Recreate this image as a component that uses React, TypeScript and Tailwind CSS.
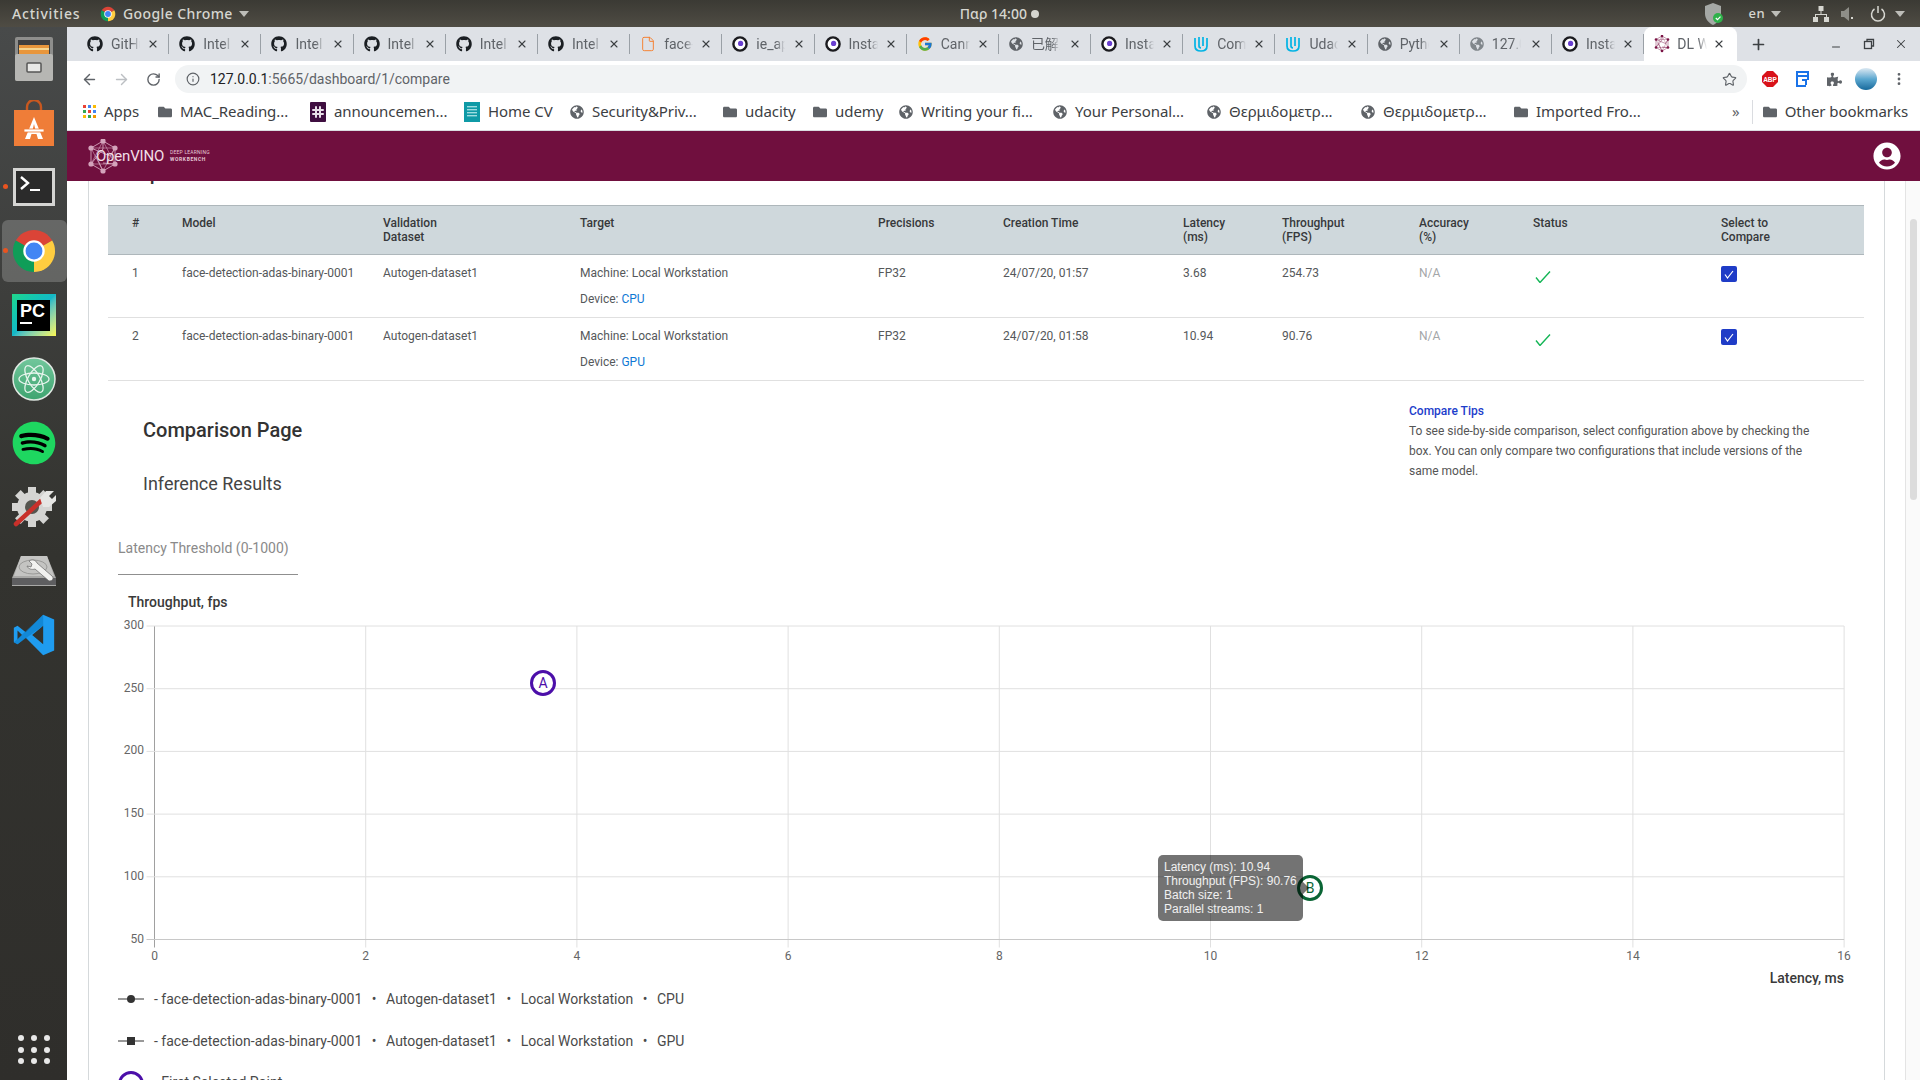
import React from 'react';
import { ArrowLeft, ArrowRight, RotateCw, Info, Star, EllipsisVertical, Plus, X, Minus, File } from 'lucide-react';
import { FaGithub, FaGlobeAmericas, FaFolder, FaUserCircle, FaPuzzlePiece, FaSpotify } from 'react-icons/fa';
import { FcGoogle } from 'react-icons/fc';

const Mesh = ({ size, color, className }: { size: number; color: string; className?: string }) => {
  const pts: [number, number][] = [[16, 2], [28, 9], [28, 25], [16, 32], [4, 25], [4, 9]];
  const inner: [number, number][] = [[16, 10], [23, 17], [16, 24], [9, 17]];
  return (
    <svg width={size} height={size * 35 / 32} viewBox="0 0 32 35" className={className}>
      {pts.map((p, i) => (
        <g key={i}>
          <line x1={p[0]} y1={p[1]} x2={pts[(i + 1) % 6][0]} y2={pts[(i + 1) % 6][1]} stroke={color} strokeWidth="0.9" />
          <line x1={p[0]} y1={p[1]} x2={inner[i % 4][0]} y2={inner[i % 4][1]} stroke={color} strokeWidth="0.9" />
          <line x1={p[0]} y1={p[1]} x2={pts[(i + 2) % 6][0]} y2={pts[(i + 2) % 6][1]} stroke={color} strokeWidth="0.6" />
          <circle cx={p[0]} cy={p[1]} r="2.6" fill={color} />
        </g>
      ))}
    </svg>
  );
};

const ChromeLogo = ({ size }: { size: number }) => (
  <svg width={size} height={size} viewBox="0 0 24 24">
    <path d="M2.5 6.5A11 11 0 0 1 21.5 6.5L12 12Z" fill="#db4437" />
    <path d="M2.5 6.5A11 11 0 0 0 12 23L12 12Z" fill="#0f9d58" />
    <path d="M21.5 6.5A11 11 0 0 1 12 23L12 12Z" fill="#ffcd40" />
    <circle cx="12" cy="12" r="5.6" fill="#fff" />
    <circle cx="12" cy="12" r="4.4" fill="#4285f4" />
  </svg>
);

const InstIcon = () => (
  <svg width="16" height="16" viewBox="0 0 16 16" className="shrink-0">
    <circle cx="8" cy="8" r="6.6" fill="#fff" stroke="#1b1b1f" strokeWidth="2.4" />
    <circle cx="8.6" cy="7.4" r="2.6" fill="#6a3fd0" />
  </svg>
);

const UdacityIcon = () => (
  <svg width="16" height="18" viewBox="0 0 16 18" className="shrink-0" fill="none" stroke="#02b3e4" strokeWidth="1.7">
    <path d="M2 3v8c0 3 2.400 5 6 5s6-2 6-5V3" />
    <path d="M6 2v9c0 1 .8 1.800 2 1.800" />
    <path d="M10 2v9" />
  </svg>
);

const Globe = ({ className = 'text-[#5f6368]' }: { className?: string }) => <FaGlobeAmericas size={14} className={`shrink-0 ${className}`} />;
const Git = () => <FaGithub size={16} className="shrink-0 text-[#1b1f23]" />;

const tabs: { title: string; icon: React.ReactNode; active?: boolean }[] = [
  { title: 'GitHub', icon: <Git /> },
  { title: 'Intel', icon: <Git /> },
  { title: 'Intel', icon: <Git /> },
  { title: 'Intel', icon: <Git /> },
  { title: 'Intel', icon: <Git /> },
  { title: 'Intel', icon: <Git /> },
  { title: 'face-detection', icon: <File size={16} strokeWidth={1.4} className="shrink-0 text-[#f57c28]" /> },
  { title: 'ie_api', icon: <InstIcon /> },
  { title: 'Instance', icon: <InstIcon /> },
  { title: 'Canny', icon: <FcGoogle size={16} className="shrink-0" /> },
  { title: '已解决', icon: <Globe /> },
  { title: 'Instance', icon: <InstIcon /> },
  { title: 'Compare', icon: <UdacityIcon /> },
  { title: 'Udacity', icon: <UdacityIcon /> },
  { title: 'Python', icon: <Globe /> },
  { title: '127.0.0.1', icon: <Globe className="text-[#80868b]" /> },
  { title: 'Instance', icon: <InstIcon /> },
];

const Folder = () => <FaFolder size={14} className="shrink-0 text-[#5f6368]" />;

const AppsIcon = () => {
  const c = ['#ea4335', '#4285f4', '#fbbc04', '#34a853', '#ea4335', '#4285f4', '#fbbc04', '#34a853', '#f29900'];
  return (
    <span className="grid grid-cols-3 gap-[2px] w-[13px] shrink-0">
      {c.map((k, i) => (
        <svg key={i} width="3" height="3" viewBox="0 0 3 3"><rect width="3" height="3" fill={k} /></svg>
      ))}
    </span>
  );
};

const SlackIcon = () => (
  <svg width="16" height="20" viewBox="0 0 16 20" className="shrink-0">
    <rect width="16" height="20" rx="1" fill="#3f0e40" />
    <g stroke="#e8e0e8" strokeWidth="2" strokeLinecap="round">
      <path d="M6 5v10M10 5v10M3 8h10M3 12h10" />
    </g>
  </svg>
);

const CvIcon = () => (
  <svg width="16" height="20" viewBox="0 0 16 20" className="shrink-0">
    <rect width="16" height="20" fill="#0f9aa6" />
    <g fill="#9fdde0">
      <rect x="3" y="4" width="10" height="1.4" /><rect x="3" y="7" width="10" height="1.4" />
      <rect x="3" y="10" width="10" height="1.4" /><rect x="3" y="13" width="10" height="1.4" />
    </g>
  </svg>
);

const bookmarks: { w: string; icon: React.ReactNode; label: string }[] = [
  { w: 'w-[75px]', icon: <AppsIcon />, label: 'Apps' },
  { w: 'w-[152px]', icon: <Folder />, label: 'MAC_Reading...' },
  { w: 'w-[154px]', icon: <SlackIcon />, label: 'announcemen...' },
  { w: 'w-[106px]', icon: <CvIcon />, label: 'Home CV' },
  { w: 'w-[153px]', icon: <Globe />, label: 'Security&Priv...' },
  { w: 'w-[90px]', icon: <Folder />, label: 'udacity' },
  { w: 'w-[86px]', icon: <Folder />, label: 'udemy' },
  { w: 'w-[154px]', icon: <Globe />, label: 'Writing your fi...' },
  { w: 'w-[154px]', icon: <Globe />, label: 'Your Personal...' },
  { w: 'w-[154px]', icon: <Globe />, label: 'Θερμιδομετρ...' },
  { w: 'w-[153px]', icon: <Globe />, label: 'Θερμιδομετρ...' },
  { w: 'w-[221px]', icon: <Folder />, label: 'Imported Fro...' },
];

const dockSlot = 'h-[64px] w-full flex items-center justify-center relative shrink-0';

const Dock = () => (
  <aside className="w-[67px] shrink-0 h-full bg-gradient-to-b from-[#484a4a] via-[#33332f] to-[#2f2e2b] flex flex-col">
    <div className={dockSlot}>
      <svg width="42" height="46" viewBox="0 0 42 46">
        <rect x="2" y="1" width="38" height="44" rx="2" fill="#8e8e8c" />
        <rect x="5" y="4" width="32" height="14" fill="#3f3f3f" />
        <rect x="6" y="9" width="30" height="9" fill="#e8963c" />
        <rect x="6" y="12" width="30" height="2" fill="#f6d58f" />
        <rect x="2" y="18" width="38" height="27" rx="2" fill="#b6b6b3" />
        <rect x="14" y="27" width="14" height="9" rx="1" fill="#e8e8e6" stroke="#555" strokeWidth="1.5" />
      </svg>
    </div>
    <div className={dockSlot}>
      <svg width="42" height="46" viewBox="0 0 42 46">
        <path d="M14 12V7a7 7 0 0 1 14 0v5" fill="none" stroke="#c9581f" strokeWidth="2.4" />
        <rect x="1" y="10" width="40" height="36" fill="#ef7d38" />
        <path d="M21 17l-9 22h5l1.500-5h5l1.500 5h5zM21 24l1.500 6h-3z" fill="#fff" fillRule="evenodd" />
        <rect x="11" y="29" width="20" height="3" fill="#fff" stroke="#ef7d38" strokeWidth=".8" />
      </svg>
    </div>
    <div className={dockSlot}>
      <span className="absolute left-[3px] top-[29px] w-[5px] h-[5px] rounded-full bg-[#e95420]" />
      <svg width="44" height="40" viewBox="0 0 44 40">
        <rect x="1" y="1" width="42" height="38" fill="#d5d5d3" />
        <rect x="4" y="4" width="36" height="32" fill="#2b2b2b" />
        <path d="M9 10l7 6-7 6" fill="none" stroke="#fff" strokeWidth="2.400" />
        <rect x="18" y="22" width="10" height="2" fill="#fff" />
      </svg>
    </div>
    <div className={dockSlot}>
      <span className="absolute left-[2px] right-0 top-[1px] bottom-[1px] rounded-md bg-white/20" />
      <span className="absolute left-[3px] top-[29px] w-[5px] h-[5px] rounded-full bg-[#e95420]" />
      <span className="relative"><ChromeLogo size={46} /></span>
    </div>
    <div className={dockSlot}>
      <div className="w-[44px] h-[42px] bg-gradient-to-br from-[#21d789] via-[#14b8c8] to-[#fcf84a] flex items-center justify-center">
        <div className="w-[33px] h-[31px] bg-black flex flex-col px-[3px] pt-[1px]">
          <span className="text-white text-[18px] leading-[21px] font-bold font-['Liberation_Sans',sans-serif]">PC</span>
          <span className="w-[12px] h-[2px] bg-white" />
        </div>
      </div>
    </div>
    <div className={dockSlot}>
      <svg width="44" height="44" viewBox="0 0 44 44">
        <defs>
          <linearGradient id="atomg" x1="0" y1="0" x2="0" y2="1">
            <stop offset="0" stopColor="#72c79c" />
            <stop offset="1" stopColor="#3ea470" />
          </linearGradient>
        </defs>
        <circle cx="22" cy="22" r="21" fill="url(#atomg)" stroke="#dfe8e2" strokeWidth="1.500" />
        <g fill="none" stroke="#e8f5ee" strokeWidth="1.300">
          <ellipse cx="22" cy="22" rx="15" ry="6" />
          <ellipse cx="22" cy="22" rx="15" ry="6" transform="rotate(60 22 22)" />
          <ellipse cx="22" cy="22" rx="15" ry="6" transform="rotate(120 22 22)" />
        </g>
        <circle cx="22" cy="22" r="2.200" fill="#e8f5ee" />
      </svg>
    </div>
    <div className={dockSlot}>
      <span className="relative flex items-center justify-center w-[44px] h-[44px]">
        <span className="absolute w-[36px] h-[36px] bg-black rounded-full" />
        <FaSpotify size={44} className="relative text-[#1ed760]" />
      </span>
    </div>
    <div className={dockSlot}>
      <svg width="46" height="46" viewBox="0 0 46 46">
        <g fill="#d4d4d2">
          <circle cx="21" cy="23" r="15" />
          {[0, 45, 90, 135, 180, 225, 270, 315].map(a => (
            <rect key={a} x="17" y="3" width="8" height="8" transform={`rotate(${a} 21 23)`} />
          ))}
        </g>
        <circle cx="21" cy="23" r="7" fill="#55554f" />
        <path d="M5 40L30 17" stroke="#c8302a" strokeWidth="4.500" strokeLinecap="round" />
        <path d="M29 14l6-7 8 0-5 5 3 3 4-4 0 6-7 6-6 0z" fill="#e6e6e4" />
      </svg>
    </div>
    <div className={dockSlot}>
      <svg width="46" height="34" viewBox="0 0 46 34">
        <path d="M10 2h26l9 22v8H1v-8z" fill="#a8a8a6" />
        <path d="M10 2h26l7 20H3z" fill="#c4c4c2" />
        <rect x="1" y="24" width="44" height="7" fill="#5e5e60" />
        <ellipse cx="22" cy="13" rx="14" ry="7" fill="none" stroke="#9a9a98" />
        <path d="M18 7c3-2 7-1 8 2l15 13c2 2 1 5-3 5L24 15c-3 1-7 0-8-3l4 1 1-3z" fill="#f2f2f0" stroke="#666" strokeWidth=".7" />
      </svg>
    </div>
    <div className={dockSlot}>
      <svg width="44" height="44" viewBox="0 0 24 24">
        <path d="M17 1L7.500 10.500 3 7 1 8v8l2 1 4.500-3.500L17 23l6-2.500v-17zM17 7v10l-6-5zM3 9.500L5.500 12 3 14.500z" fill="#1f9cf0" fillRule="evenodd" />
        <path d="M17 1v6L3 17l-2-1z" fill="#0a7cc7" opacity=".6" />
      </svg>
    </div>
    <div className="flex-1 flex items-end justify-center pb-[16px]">
      <div className="grid grid-cols-3 gap-x-[7px] gap-y-[5.500px]">
        {Array.from({ length: 9 }).map((_, i) => (
          <span key={i} className="w-[6px] h-[6px] rounded-full bg-[#e8e8e8]" />
        ))}
      </div>
    </div>
  </aside>
);

const Caret = ({ className }: { className: string }) => (
  <span className={`w-0 h-0 border-x-[5px] border-x-transparent border-t-[6px] border-t-[#bdbdb8] ${className}`} />
);

const TopBar = () => (
  <header className="h-[27px] bg-gradient-to-b from-[#3b3a34] to-[#4f4c44] flex items-center text-[#d6d6d0] text-[14px] font-medium tracking-[.4px] font-['Noto_Sans',sans-serif]">
    <span className="ml-[12px] w-[88px] tracking-[.8px]">Activities</span>
    <ChromeLogo size={16} />
    <span className="ml-[7px]">Google Chrome</span>
    <Caret className="ml-[6px]" />
    <div className="ml-[711px] flex items-center tracking-normal text-[14px]">
      <span>Παρ 14:00</span>
      <span className="ml-[4px] w-[8px] h-[8px] rounded-full bg-[#d6d6d0]" />
    </div>
    <div className="ml-auto flex items-center">
      <svg width="20" height="24" viewBox="0 0 20 24">
        <path d="M8 1l8 3v8c0 5-4 9-8 11-4-2-8-6-8-11V4z" fill="#a5a8a5" />
        <circle cx="13" cy="16" r="5" fill="#2fb14a" />
        <path d="M10.800 16l1.700 1.700 3-3" stroke="#fff" fill="none" strokeWidth="1.200" />
      </svg>
      <span className="ml-[24px] text-[13px]">en</span>
      <Caret className="ml-[6px]" />
      <svg className="ml-[31px]" width="18" height="18" viewBox="0 0 18 18" fill="#d6d6d0">
        <rect x="6.500" y="1" width="5" height="5" /><rect x="1" y="12" width="5" height="5" /><rect x="12" y="12" width="5" height="5" />
        <path d="M8.500 6h1v3h5.500v3h-1v-2H4v2H3V9h5.500z" />
      </svg>
      <svg className="ml-[10px]" width="16" height="18" viewBox="0 0 16 18" fill="#8e8e88">
        <path d="M1 6h3l5-4v14l-5-4H1z" /><path d="M11 12l2 2m0-2l-2 2" stroke="#d6d6d0" />
      </svg>
      <svg className="ml-[14px]" width="16" height="18" viewBox="0 0 16 18" fill="none" stroke="#d6d6d0" strokeWidth="1.500">
        <path d="M4.500 4a6.500 6.500 0 1 0 7 0M8 1v7" />
      </svg>
      <Caret className="ml-[9px] mr-[15px]" />
    </div>
  </header>
);

const tabTitle = "text-[14px] leading-[18px] text-[#5f6368] whitespace-nowrap overflow-hidden font-['Roboto','Noto_Sans_CJK_SC',sans-serif] [mask-image:linear-gradient(to_right,black_70%,transparent)]";

const TabStrip = () => (
  <div className="h-[34px] bg-[#dee1e6] flex pl-[10px]">
    {tabs.map((t, i) => (
      <div key={i} className="w-[92.200px] shrink-0 h-full flex items-center">
        <div className="flex items-center flex-1 pl-[10px]">
          {t.icon}
          <span className={`ml-[8px] w-[29px] ${tabTitle}`}>{t.title}</span>
        </div>
        <X size={12} strokeWidth={2.2} className="text-[#3c4043] mr-[9px] shrink-0" />
        <span className="w-px h-[20px] bg-[#9aa0a6]" />
      </div>
    ))}
    <div className="w-[93px] shrink-0 h-full bg-white rounded-t-lg flex items-center pl-[10px]">
      <Mesh size={16} color="#7a1445" className="shrink-0" />
      <span className={`ml-[7px] w-[30px] ${tabTitle} text-[#3c4043]`}>DL Workbench</span>
      <X size={12} strokeWidth={2.2} className="text-[#3c4043] ml-[6px] shrink-0" />
    </div>
    <Plus size={17} strokeWidth={2.400} className="text-[#3c4043] ml-[13px] self-center" />
    <div className="ml-auto flex items-center self-center text-[#3c4043]">
      <Minus size={12} strokeWidth={2} className="mt-[5px]" />
      <svg className="ml-[21px]" width="12" height="12" viewBox="0 0 12 12" fill="none" stroke="#3c4043" strokeWidth="1.300">
        <rect x="1.500" y="3.500" width="7" height="7" /><path d="M4 3V1.500h6.500V8H9" />
      </svg>
      <X size={14} strokeWidth={1.800} className="ml-[19px] mr-[12px]" />
    </div>
  </div>
);

const Toolbar = () => (
  <div className="h-[32px] bg-white flex items-end">
    <div className="w-[108px] h-[28px] shrink-0 flex items-center text-[#5f6368]">
      <ArrowLeft size={17} strokeWidth={2} className="ml-[14px]" />
      <ArrowRight size={17} strokeWidth={2} className="ml-[15px] text-[#bcbfc3]" />
      <RotateCw size={15} strokeWidth={2.200} className="ml-[16px]" />
    </div>
    <div className="w-[1572px] h-[28px] bg-[#f1f3f4] rounded-full flex items-center shrink-0">
      <Info size={14} strokeWidth={2} className="ml-[11px] text-[#5f6368]" />
      <span className="ml-[10px] text-[14px] text-[#5f6368] font-['Roboto',sans-serif]"><span className="text-[#202124]">127.0.0.1</span>:5665/dashboard/1/compare</span>
      <Star size={15} strokeWidth={1.800} className="ml-auto mr-[10px] text-[#5f6368]" />
    </div>
    <div className="flex-1 h-[28px] flex items-center">
      <svg className="ml-[15px]" width="16" height="16" viewBox="0 0 16 16">
        <path d="M5 0h6l5 5v6l-5 5H5l-5-5V5z" fill="#d8121a" />
        <text x="8" y="10.500" fontSize="6.500" fontWeight="700" fill="#fff" textAnchor="middle" fontFamily="Liberation Sans">ABP</text>
      </svg>
      <svg className="ml-[16px]" width="16" height="18" viewBox="0 0 16 18" fill="none" stroke="#1a73e8" strokeWidth="2">
        <path d="M12 16H3V2h11v8" /><path d="M3 6h11" /><path d="M8 10h4v5" />
      </svg>
      <FaPuzzlePiece size={15} className="ml-[17px] text-[#5f6368]" />
      <span className="ml-[13px] w-[22px] h-[22px] rounded-full bg-gradient-to-b from-[#dce9f2] via-[#5ba8d0] to-[#146a9c]" />
      <EllipsisVertical size={16} strokeWidth={2.200} className="ml-[14px] text-[#5f6368]" />
    </div>
  </div>
);

const bmText = "text-[15px] tracking-[-.05px] text-[#3c4043] whitespace-nowrap font-['Noto_Sans',sans-serif]";

const Bookmarks = () => (
  <div className="h-[38px] bg-white border-b border-[#dadce0] flex items-center pl-[16px]">
    {bookmarks.map((b, i) => (
      <div key={i} className={`${b.w} shrink-0 flex items-center gap-[8px]`}>
        {b.icon}
        <span className={bmText}>{b.label}</span>
      </div>
    ))}
    <span className="text-[15px] text-[#5f6368] mr-[12px] -ml-[3px]">»</span>
    <span className="w-px h-[24px] bg-[#dadce0] mr-[10px]" />
    <div className="flex items-center gap-[8px]">
      <Folder />
      <span className={bmText}>Other bookmarks</span>
    </div>
  </div>
);

const AppHeader = () => (
  <div className="h-[50px] bg-[#700f3e] flex items-center pl-[20px] pr-[19px] shrink-0 relative z-10">
    <Mesh size={32} color="#d4a3bb" />
    <span className="-ml-[23px] text-[15px] tracking-[-.2px] text-[#f0dfe7] font-['Roboto',sans-serif]">OpenVINO</span>
    <div className="ml-[6px] flex flex-col text-[5px] leading-[7px] text-[#e3c7d5] font-['Roboto',sans-serif] tracking-[.2px]">
      <span>DEEP LEARNING</span>
      <span className="font-bold tracking-[.6px]">WORKBENCH</span>
    </div>
    <FaUserCircle size={28} className="ml-auto text-white" />
  </div>
);

const rows = [
  { n: 1, dev: 'CPU', time: '24/07/20, 01:57', lat: '3.68', thr: '254.73' },
  { n: 2, dev: 'GPU', time: '24/07/20, 01:58', lat: '10.94', thr: '90.76' },
];

const cols = 'grid grid-cols-[50px_201px_197px_298px_125px_180px_99px_137px_114px_188px_143px] pl-[24px]';

const Table = () => (
  <div className="ml-[19px] mr-[20px] text-[12px] font-['Roboto',sans-serif]">
    <div className={`${cols} h-[50px] pt-[10px] bg-[#cfd8dc] border-y border-[#aeb7bb] leading-[14px] font-medium text-[#37393b]`}>
      <span>#</span><span>Model</span><span>Validation<br />Dataset</span><span>Target</span><span>Precisions</span><span>Creation Time</span>
      <span>Latency<br />(ms)</span><span>Throughput<br />(FPS)</span><span>Accuracy<br />(%)</span><span>Status</span><span>Select to<br />Compare</span>
    </div>
    {rows.map(r => (
      <div key={r.n} className={`${cols} h-[63px] pt-[5px] border-b border-[#e0e0e0] leading-[26px] text-[#55585a]`}>
        <span>{r.n}</span>
        <span>face-detection-adas-binary-0001</span>
        <span>Autogen-dataset1</span>
        <div>
          <div>Machine: Local Workstation</div>
          <div>Device: <span className="text-[#0f78d4]">{r.dev}</span></div>
        </div>
        <span>FP32</span>
        <span>{r.time}</span>
        <span>{r.lat}</span>
        <span>{r.thr}</span>
        <span className="text-[#a3a6a8]">N/A</span>
        <div className="pt-[11px] pl-[2px]">
          <svg width="16" height="12" viewBox="0 0 16 12" fill="none" stroke="#13b555" strokeWidth="1.400"><path d="M1 6.500l4 5L15 .5" /></svg>
        </div>
        <div className="pt-[6px]">
          <div className="w-[16px] h-[16px] rounded-[2px] bg-[#1f3cc7] flex items-center justify-center">
            <svg width="10" height="9" viewBox="0 0 10 9" fill="none" stroke="#fff" strokeWidth="1.200"><path d="M1 4.500l2.500 3.500L9 1" /></svg>
          </div>
        </div>
      </div>
    ))}
  </div>
);

const xTicks = [0, 2, 4, 6, 8, 10, 12, 14, 16];
const yTicks = [300, 250, 200, 150, 100, 50];
const X0 = 154.5, XS = 105.6, Y0 = 626, YS = 62.7;
const px = (v: number) => X0 + v * XS;
const py = (v: number) => Y0 + ((300 - v) / 50) * YS;

const Chart = () => (
  <div className="relative w-[1795px] h-[410px]">
    <svg width="1795" height="410" viewBox="89 575 1795 410" fontFamily="Roboto" className="block">
      <text x="128" y="607" fontSize="14" fontWeight="500" fill="#3a3a3a">Throughput, fps</text>
      {xTicks.map(v => (
        <g key={v}>
          <line x1={px(v)} x2={px(v)} y1={Y0} y2={py(50) + 8} stroke={v === 0 ? '#a0a0a0' : '#e0e0e0'} />
          <text x={px(v)} y="960" fontSize="12" fill="#666" textAnchor="middle">{v}</text>
        </g>
      ))}
      {yTicks.map(v => (
        <g key={v}>
          <line x1={X0 - 8} x2={px(16)} y1={py(v)} y2={py(v)} stroke={v === 50 ? '#c8c8c8' : '#e0e0e0'} />
          <text x="144" y={py(v) + 3} fontSize="12" fill="#666" textAnchor="end">{v}</text>
        </g>
      ))}
      <circle cx="543" cy="683" r="11.500" fill="#fff" stroke="#4c0fa9" strokeWidth="3" />
      <text x="543" y="688" fontSize="14" fill="#4c0fa9" textAnchor="middle">A</text>
      <circle cx="1310" cy="888" r="11.500" fill="#fff" stroke="#0a6535" strokeWidth="3" />
      <text x="1310" y="893" fontSize="14" fill="#0a6535" textAnchor="middle">B</text>
      <text x="1844" y="983" fontSize="14" fontWeight="500" fill="#3a3a3a" textAnchor="end">Latency, ms</text>
    </svg>
    <div className="absolute left-[1069px] top-[280px] w-[145px] h-[66px] rounded-[5px] bg-black/55 px-[6px] pt-[5px] text-[12px] leading-[14px] text-white/90 font-['Liberation_Sans',sans-serif] whitespace-nowrap">
      <div>Latency (ms): 10.94</div>
      <div>Throughput (FPS): 90.76</div>
      <div>Batch size: 1</div>
      <div>Parallel streams: 1</div>
      <span className="absolute left-full top-[27px] w-0 h-0 border-y-[6px] border-y-transparent border-l-[6px] border-l-black/55" />
    </div>
  </div>
);

const Dot = () => <span className="mx-[9.500px]">•</span>;

const LegendRow = ({ dev, square, className }: { dev: string; square?: boolean; className: string }) => (
  <div className={`flex items-center h-[20px] text-[14px] text-[#4a4a4a] font-['Roboto',sans-serif] whitespace-nowrap ${className}`}>
    <svg width="26" height="12" viewBox="0 0 26 12" className="mr-[10px]">
      <line x1="0" x2="26" y1="6" y2="6" stroke="#777" strokeWidth="1.500" />
      {square ? <rect x="9" y="2" width="8" height="8" fill="#333" /> : <circle cx="13" cy="6" r="4" fill="#333" />}
    </svg>
    <span>- face-detection-adas-binary-0001</span><Dot />
    <span>Autogen-dataset1</span><Dot />
    <span>Local Workstation</span><Dot />
    <span>{dev}</span>
  </div>
);

const Content = () => (
  <div className="flex-1 h-full flex overflow-hidden bg-white">
    <div className="w-[21px] shrink-0" />
    <main className="w-[1797px] shrink-0 border-x border-[#d5d9db] overflow-hidden font-['Roboto',sans-serif]">
      <div className="h-[24px] overflow-hidden pl-[19px]">
        <div className="-mt-[22px] text-[20px] leading-[28px] font-medium text-[#333]">Compare</div>
      </div>
      <Table />
      <div className="flex">
        <div className="w-[1320px] shrink-0">
          <h1 className="mt-[35px] ml-[54px] text-[20px] leading-[28px] font-medium text-[#333]">Comparison Page</h1>
          <h2 className="mt-[27px] ml-[54px] text-[18px] leading-[26px] text-[#444]">Inference Results</h2>
          <div className="mt-[41px] ml-[29px] w-[180px] h-[37px] border-b border-[#8f8f8f] text-[14px] leading-[20px] text-[#8a8a8a]">Latency Threshold (0-1000)</div>
        </div>
        <div className="w-[415px] shrink-0 pt-[22px] text-[12px]">
          <div className="leading-[16px] font-medium text-[#1d3ecb]">Compare Tips</div>
          <p className="mt-[2px] leading-[20px] text-[#555]">To see side-by-side comparison, select configuration above by checking the box. You can only compare two configurations that include versions of the same model.</p>
        </div>
      </div>
      <Chart />
      <div className="pl-[29px]">
        <LegendRow dev="CPU" className="mt-[4px]" />
        <LegendRow dev="GPU" square className="mt-[22px]" />
        <div className="mt-[20px] flex items-start h-[30px]">
          <svg width="26" height="26" viewBox="0 0 26 26">
            <circle cx="13" cy="13" r="11.500" fill="#fff" stroke="#4c0fa9" strokeWidth="3" />
            <text x="13" y="18" fontSize="13" fill="#4c0fa9" textAnchor="middle">A</text>
          </svg>
          <span className="ml-[10px] mt-[1px] text-[14px] leading-[20px] text-[#4a4a4a]">- First Selected Point</span>
        </div>
      </div>
    </main>
    <div className="w-[20px] shrink-0" />
    <div className="flex-1 border-l border-[#e4e4e4] bg-[#fafafa] pt-[38px] pl-[4px]">
      <div className="w-[7px] h-[281px] rounded-full bg-[#dcdcdc]" />
    </div>
  </div>
);

export default function App() {
  return (
    <div className="w-[1920px] h-[1080px] overflow-hidden flex flex-col bg-white">
      <TopBar />
      <div className="flex-1 flex min-h-0">
        <Dock />
        <div className="flex-1 flex flex-col min-w-0">
          <TabStrip />
          <Toolbar />
          <Bookmarks />
          <AppHeader />
          <div className="flex-1 min-h-0 flex"><Content /></div>
        </div>
      </div>
    </div>
  );
}
